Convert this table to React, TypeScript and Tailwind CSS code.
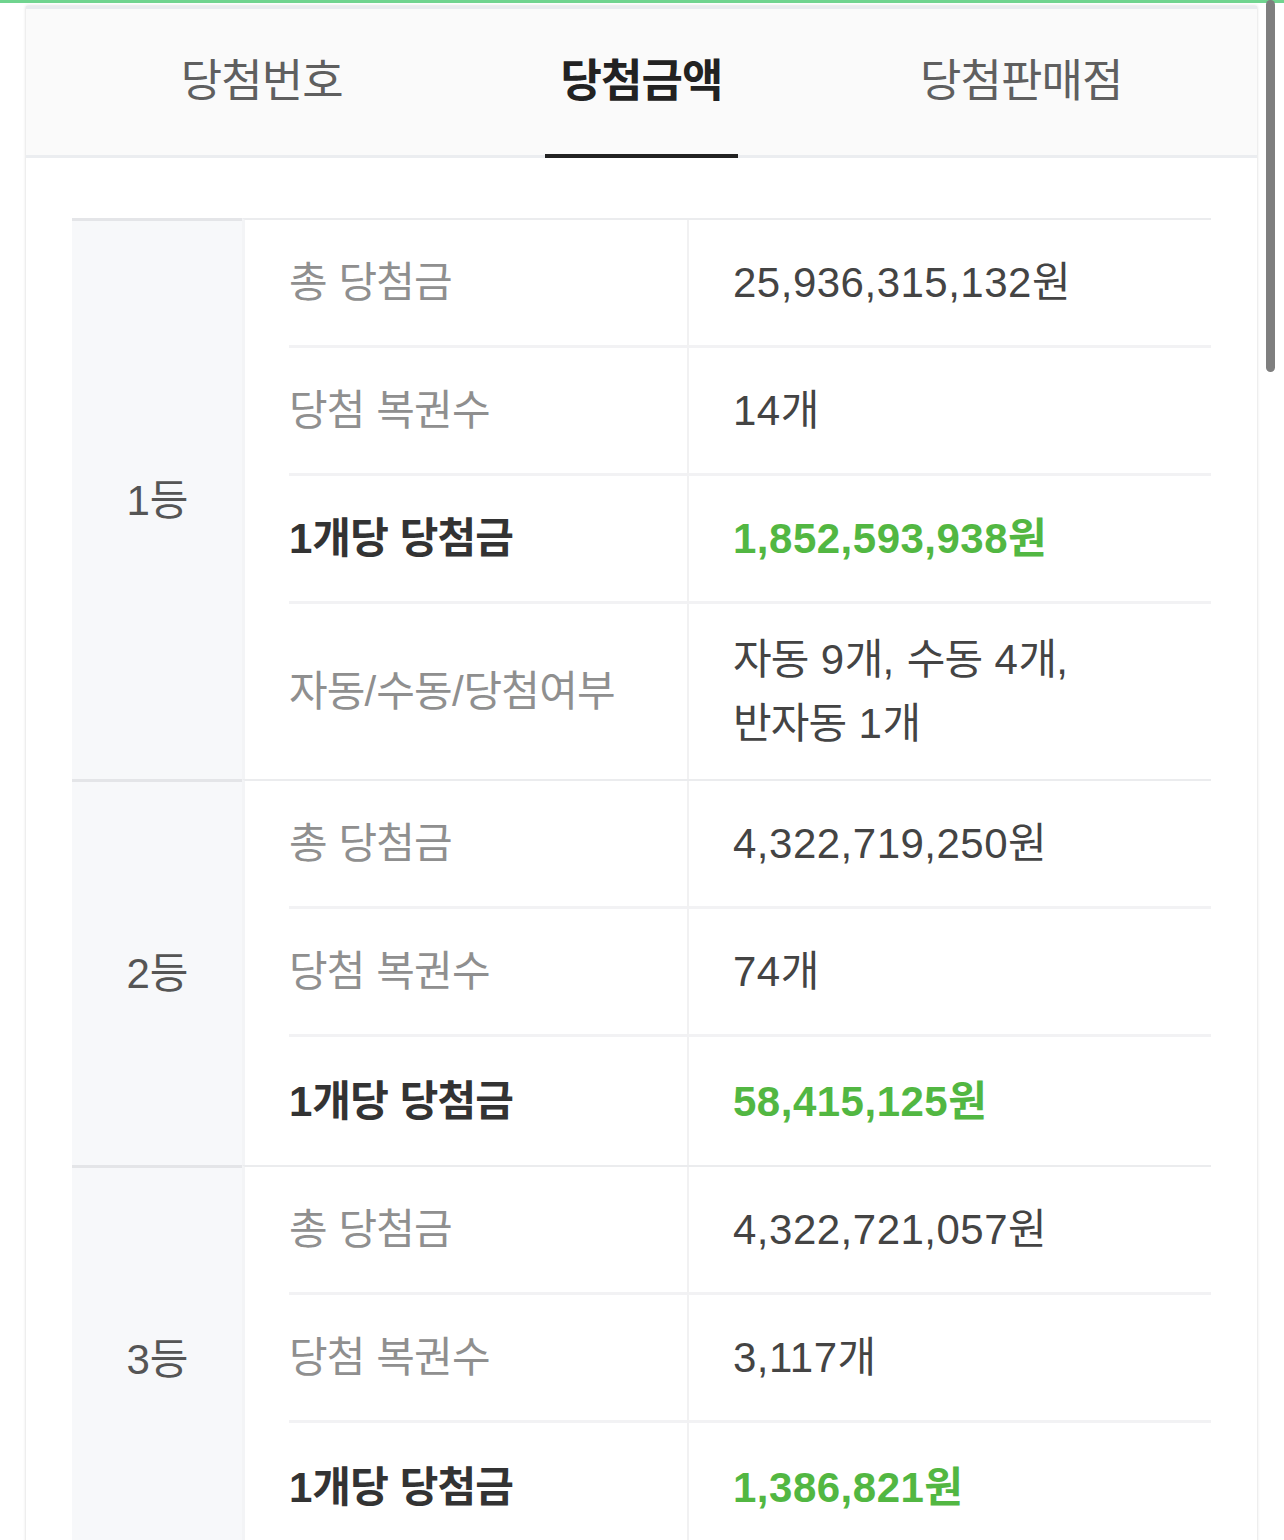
import React from "react";

// hangul runs get a slightly tighter advance so the Noto glyphs sit like the original font
const K = ({ t }: { t: string }) => (
  <span>
    {t.split(/([가-힣]+)/).map((s, i) =>
      /[가-힣]/.test(s) ? (
        <span key={i} className="tracking-[-0.02em]">
          {s}
        </span>
      ) : (
        <React.Fragment key={i}>{s}</React.Fragment>
      )
    )}
  </span>
);

type Row = {
  label: string;
  value: React.ReactNode;
  strong?: boolean;
  tall?: boolean;
};

type Grade = { name: string; rows: Row[] };

const grades: Grade[] = [
  {
    name: "1등",
    rows: [
      { label: "총 당첨금", value: <K t="25,936,315,132원" /> },
      { label: "당첨 복권수", value: <K t="14개" /> },
      { label: "1개당 당첨금", value: <K t="1,852,593,938원" />, strong: true },
      {
        label: "자동/수동/당첨여부",
        value: (
          <>
            <K t="자동 9개, 수동 4개," />
            <br />
            <K t="반자동 1개" />
          </>
        ),
        tall: true,
      },
    ],
  },
  {
    name: "2등",
    rows: [
      { label: "총 당첨금", value: <K t="4,322,719,250원" /> },
      { label: "당첨 복권수", value: <K t="74개" /> },
      { label: "1개당 당첨금", value: <K t="58,415,125원" />, strong: true },
    ],
  },
  {
    name: "3등",
    rows: [
      { label: "총 당첨금", value: <K t="4,322,721,057원" /> },
      { label: "당첨 복권수", value: <K t="3,117개" /> },
      { label: "1개당 당첨금", value: <K t="1,386,821원" />, strong: true },
    ],
  },
];

const tabs = ["당첨번호", "당첨금액", "당첨판매점"];

const GradeBlock = ({ grade }: { grade: Grade }) => {
  return (
    <div className="flex">
      <div className="w-[170px] shrink-0 bg-[#f7f8fa] border-t-[3px] border-[#e4e5e8] flex items-center justify-center text-[42px] text-[#555]">
        <K t={grade.name} />
      </div>
      <div className="flex-1 border-l-[3px] border-[#f3f4f6] border-t-2 border-t-[#ebecee]">
        {grade.rows.map((row, i) => {
          const last = i === grade.rows.length - 1;
          return (
            <div key={i} className={row.tall ? "flex h-[175px]" : "flex h-[128px]"}>
              <div className="w-[442px] shrink-0 pl-[44px] flex">
                <div
                  className={
                    (last ? "" : "border-b-[3px] border-[#f2f2f4] ") +
                    "flex-1 flex items-center text-[42px] " +
                    (row.strong ? "font-bold text-[#333]" : "text-[#8f8f8f]")
                  }
                >
                  <K t={row.label} />
                </div>
              </div>
              <div
                className={
                  (last ? "" : "border-b-[3px] border-b-[#f2f2f4] ") +
                  "flex-1 border-l-2 border-l-[#f1f1f2] pl-[44px] flex items-center text-[42px] tracking-[0.5px] " +
                  (row.tall ? "leading-[64px] " : "") +
                  (row.strong ? "font-bold text-[#52b742]" : "text-[#444]")
                }
              >
                <div>{row.value}</div>
              </div>
            </div>
          );
        })}
      </div>
    </div>
  );
};

export default function App() {
  return (
    <div className="relative h-[1540px] overflow-hidden bg-white font-['Liberation_Sans','Noto_Sans_CJK_KR',sans-serif]">
      <div className="h-[3px] bg-[#70d48f]" />
      <div className="ml-[26px] mt-[3px] w-[1231px] bg-white border-t-[3px] border-[#e9ecef] shadow-[0_0_3px_rgba(0,0,0,0.18)]">
        <div className="h-[149px] bg-[#fafafa] border-b-[3px] border-[#ebedf0] px-[46px] grid grid-cols-3">
          {tabs.map((tab, i) => {
            const active = i === 1;
            return (
              <div key={tab} className="flex justify-center">
                <div
                  className={
                    "relative flex items-center px-[15px] text-[45px] " +
                    (active ? "font-bold text-[#222]" : "text-[#5f5f5f]")
                  }
                >
                  <K t={tab} />
                  {active && (
                    <div className="absolute left-0 right-0 bottom-[-3px] h-[4px] bg-[#222]" />
                  )}
                </div>
              </div>
            );
          })}
        </div>
        <div className="px-[46px] pt-[60px] pb-[60px]">
          {grades.map((g) => (
            <GradeBlock key={g.name} grade={g} />
          ))}
        </div>
      </div>
      <div className="absolute top-0 right-[9px] w-[9px] h-[372px] rounded-full bg-[#7f7f7f]" />
    </div>
  );
}
